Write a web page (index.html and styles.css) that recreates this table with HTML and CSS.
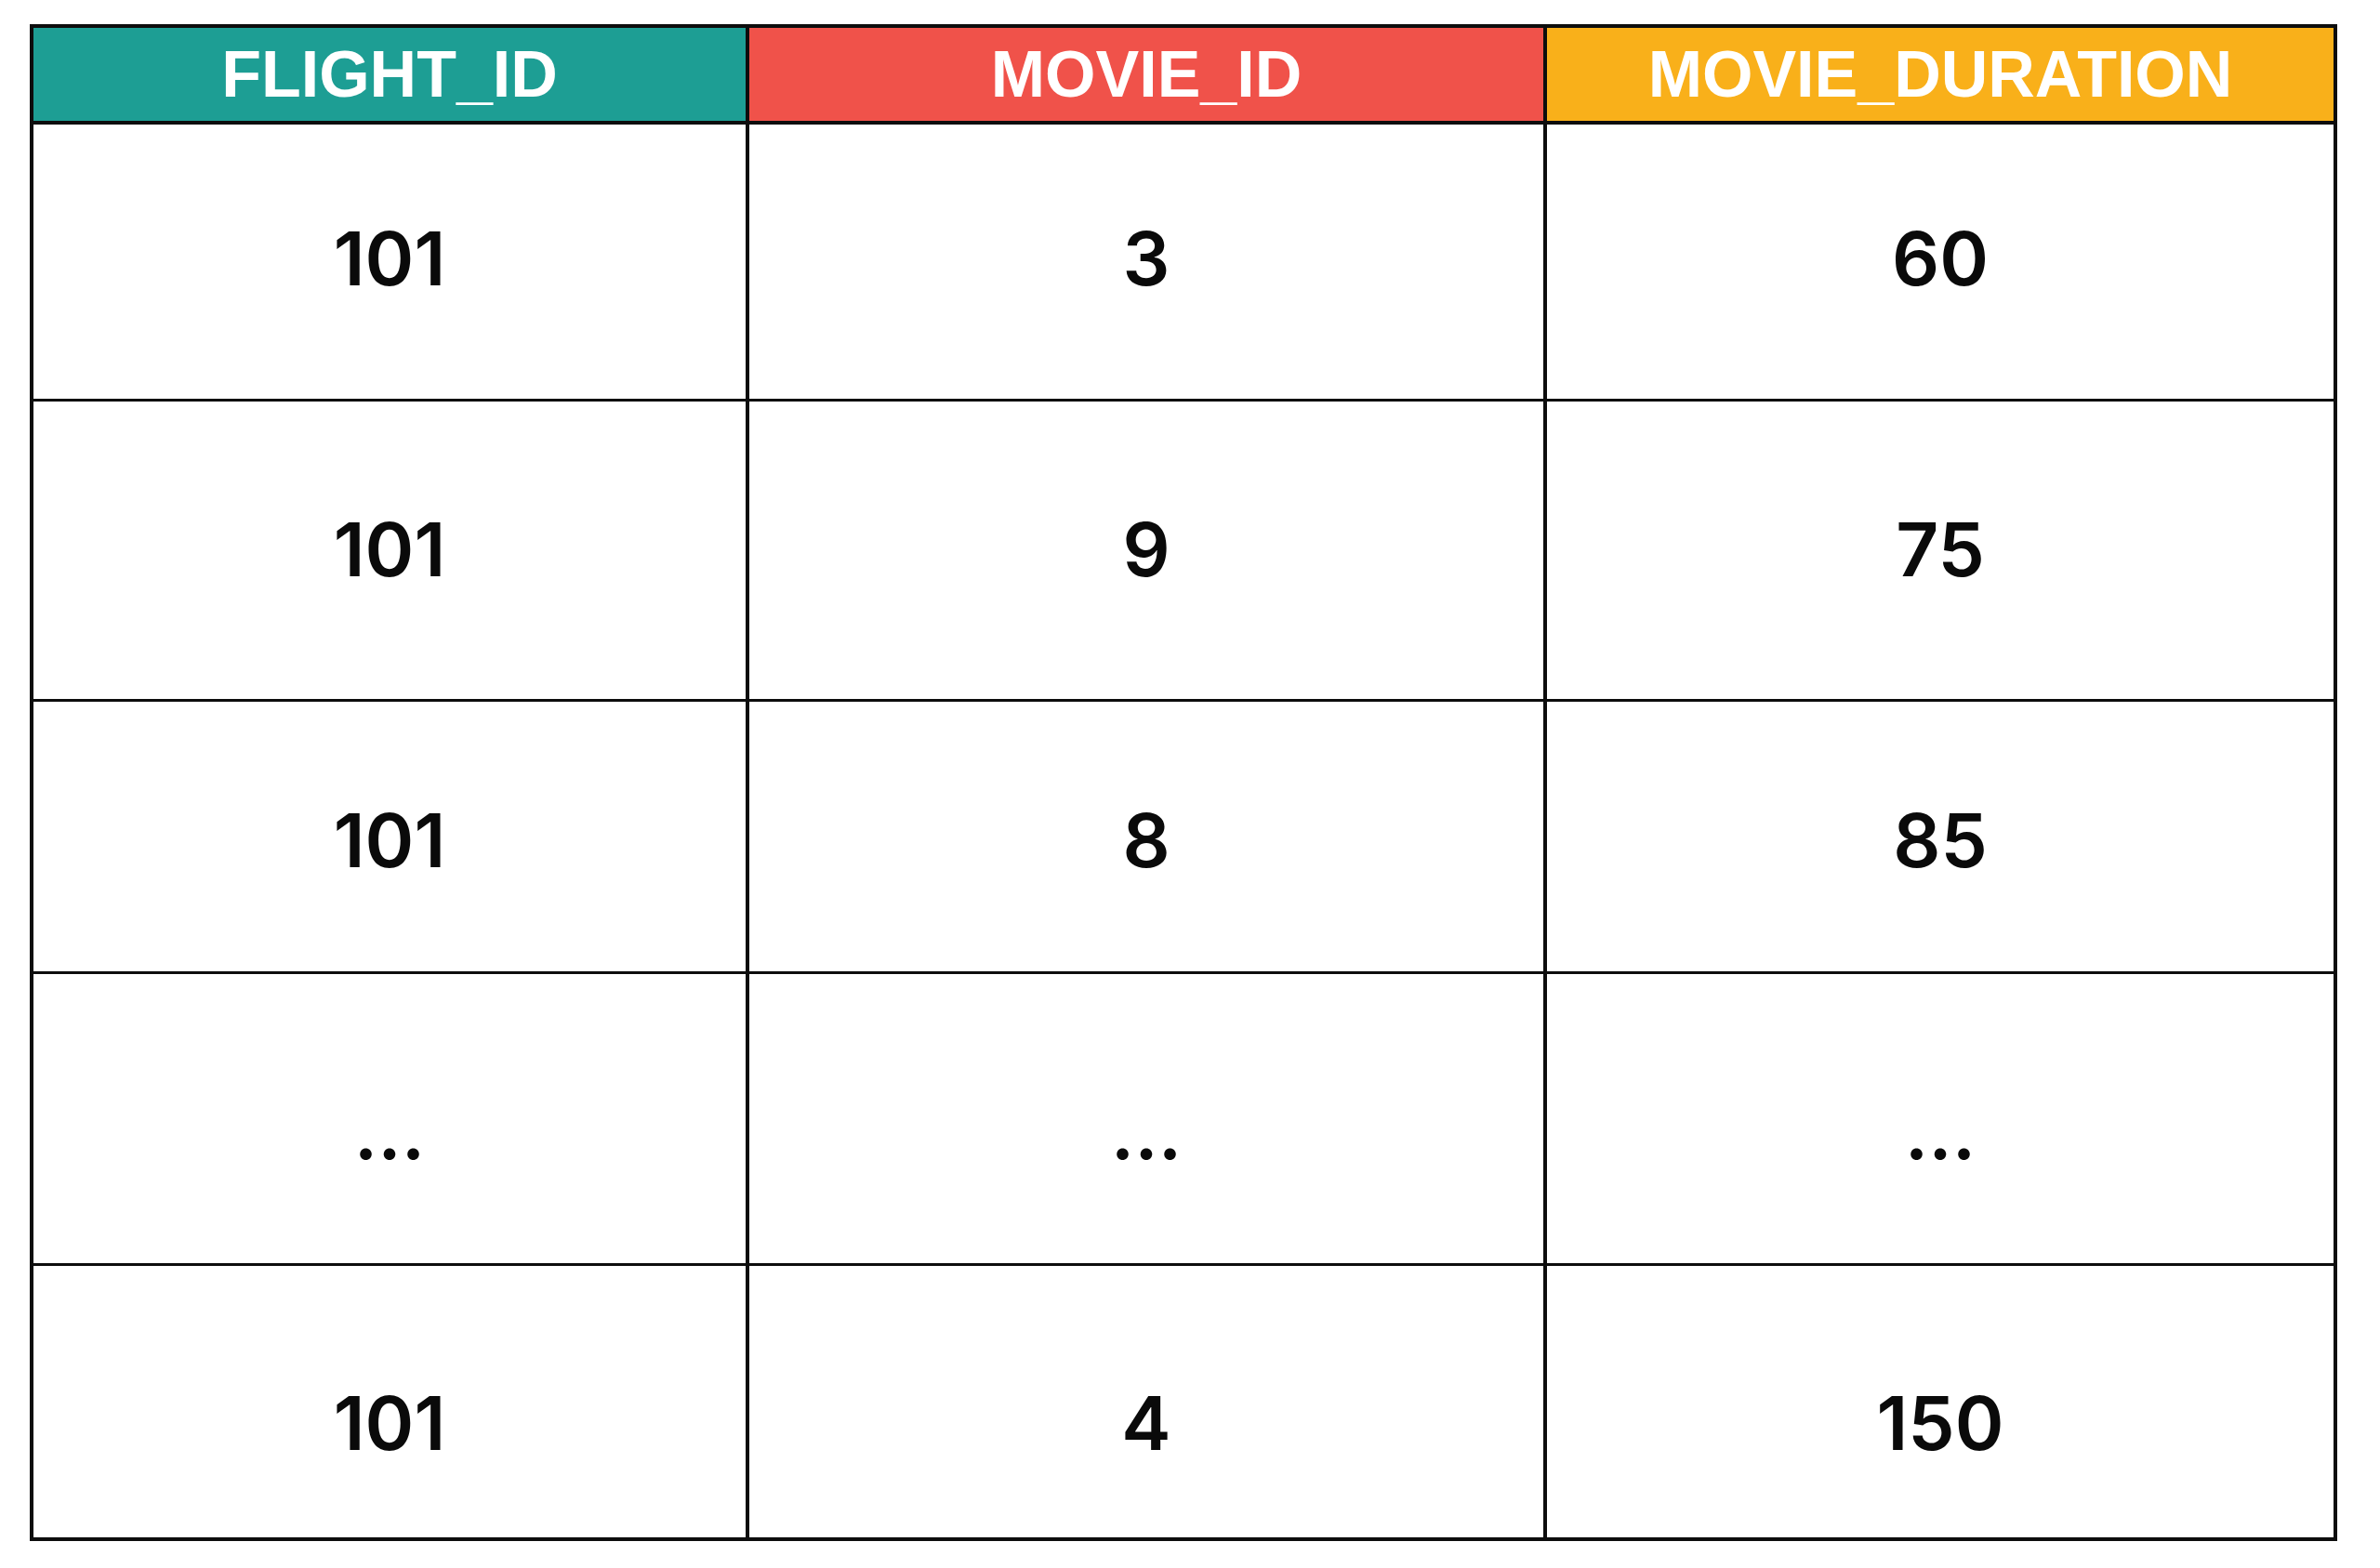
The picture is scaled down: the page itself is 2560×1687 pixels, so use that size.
FILE: index.html
```html
<!DOCTYPE html>
<html lang="en">
<head>
<meta charset="utf-8">
<title>Flight movies</title>
<link rel="stylesheet" href="styles.css">
</head>
<body>
<div class="table">
  <div class="head teal">FLIGHT_ID</div>
  <div class="head red">MOVIE_ID</div>
  <div class="head amber">MOVIE_DURATION</div>

  <div class="cell r1">101</div>
  <div class="cell r1">3</div>
  <div class="cell r1">60</div>

  <div class="cell r2">101</div>
  <div class="cell r2">9</div>
  <div class="cell r2">75</div>

  <div class="cell r3">101</div>
  <div class="cell r3">8</div>
  <div class="cell r3">85</div>

  <div class="cell r4">...</div>
  <div class="cell r4">...</div>
  <div class="cell r4">...</div>

  <div class="cell r5">101</div>
  <div class="cell r5">4</div>
  <div class="cell r5">150</div>
</div>
</body>
</html>
```

FILE: styles.css
```css
html, body {
  margin: 0;
  padding: 0;
  background: #ffffff;
}

body {
  padding: 26px 0 0 32px;
}

.table {
  display: grid;
  grid-template-columns: 766px 854px 846px;
  grid-template-rows: 101px 295px 320px 290px 311px 292px;
  column-gap: 4px;
  row-gap: 3px;
  width: max-content;
  background: #0d0d0d;
  border: 4px solid #0d0d0d;
}

.head {
  display: flex;
  align-items: center;
  justify-content: center;
  box-sizing: border-box;
  border-bottom: 1px solid #0d0d0d;
  color: #ffffff;
  font-family: "Liberation Sans", Arial, sans-serif;
  font-weight: 700;
  font-size: 70px;
  letter-spacing: 0;
  line-height: 1;
}

.teal { background: #1d9e94; }
.red { background: #f0524a; }
.amber { background: #f9b01a; }

.cell {
  display: flex;
  align-items: center;
  justify-content: center;
  box-sizing: border-box;
  background: #ffffff;
  color: #0a0a0a;
  font-family: Inter, "Noto Sans", sans-serif;
  font-weight: 600;
  font-size: 80px;
  line-height: 1;
}

.r1 { padding-bottom: 7px; }
.r2 { padding-bottom: 2px; }
.r3 { padding-top: 8px; }
.r4 { padding-top: 29px; }
.r5 { padding-top: 46px; }
```
